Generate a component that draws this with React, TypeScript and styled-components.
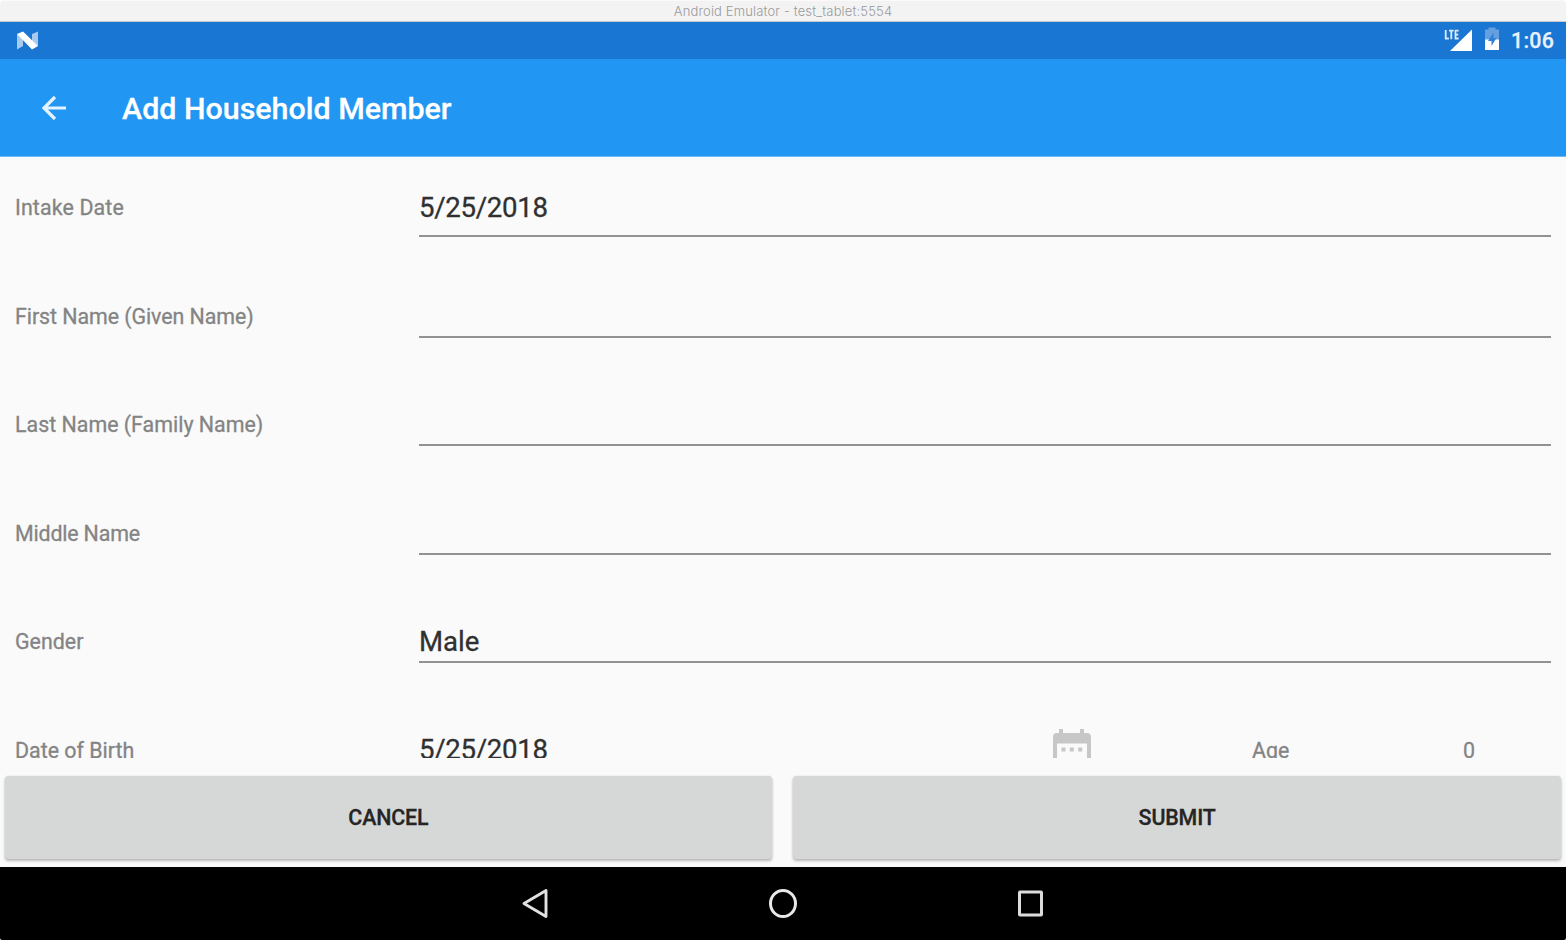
import React from 'react';
import styled, { createGlobalStyle } from 'styled-components';

const Global = createGlobalStyle`
  * { box-sizing: border-box; }
  html, body { margin: 0; background: #fff; }
  body { font-family: Roboto, "Liberation Sans", sans-serif; overflow: hidden; }
`;

const Window = styled.div`
  width: 1566px;
  height: 940px;
  display: flex;
  flex-direction: column;
  background: #fafafa;
  border-radius: 5px 5px 2px 2px;
  overflow: hidden;
`;

const TitleBar = styled.div`
  height: 22px;
  flex: none;
  background: #f3f3f3;
  border-top: 1px solid #fafafa;
  border-bottom: 1px solid #c5c8cc;
  display: flex;
  justify-content: center;
  font: 300 13px/20.500px Inter, sans-serif;
  letter-spacing: 0.15px;
  color: #9a9a9a;
  white-space: pre;
`;

const StatusBar = styled.div`
  height: 36.5px;
  flex: none;
  background: #1976d2;
  display: flex;
  align-items: center;
  justify-content: space-between;
  padding: 1px 12px 0 16px;
`;

const StatusIcons = styled.div`
  display: flex;
  align-items: center;
`;

const Clock = styled.span`
  margin-left: 11px;
  font-size: 21.4px;
  line-height: 38px;
  font-weight: 500;
  letter-spacing: 0.2px;
  color: #e8f1fb;
  -webkit-text-stroke: 0.25px #e8f1fb;
`;

const AppBar = styled.header`
  height: 98px;
  flex: none;
  background: #2196f3;
  border-bottom: 1px solid #6ebaf7;
  display: flex;
  align-items: center;
  padding: 1px 0 0 41px;
`;

const Heading = styled.h1`
  margin: 3px 0 0 55px;
  font-size: 30.4px;
  line-height: 36px;
  font-weight: 500;
  color: #fff;
  -webkit-text-stroke: 0.3px #fff;
  white-space: nowrap;
`;

const Form = styled.main`
  height: 601.5px;
  flex: none;
  overflow: hidden;
`;

const Row = styled.div`
  display: flex;
  height: 108.6px;
  padding: 0 15px;
`;

const Label = styled.label<{ $w?: number; $spacing?: number }>`
  width: ${(p) => p.$w ?? 404}px;
  flex: none;
  padding-top: 38.6px;
  font-size: 21.4px;
  line-height: 26px;
  letter-spacing: ${(p) => p.$spacing ?? 0}px;
  color: #848484;
  -webkit-text-stroke: 0.3px #848484;
  white-space: nowrap;
`;

const Field = styled.div<{ $h: number; $line?: boolean; $spacing?: number }>`
  flex: 1;
  height: ${(p) => p.$h}px;
  padding-top: 34px;
  border-bottom: ${(p) => (p.$line === false ? 'none' : '2px solid #929292')};
  font-size: 27.6px;
  line-height: 34px;
  letter-spacing: ${(p) => p.$spacing ?? 0}px;
  color: #303030;
  -webkit-text-stroke: 0.3px #303030;
`;

const CalendarSlot = styled.div`
  width: 200px;
  padding-top: 30px;
`;

const Actions = styled.div`
  flex: none;
  height: 108.5px;
  display: flex;
  gap: 21px;
  padding: 18px 5px 7px 4.5px;
`;

const ActionButton = styled.button`
  flex: 1;
  height: 82.5px;
  border: 0;
  border-radius: 3.5px;
  background: #d6d8d7;
  box-shadow: 0 2px 3px rgba(0, 0, 0, 0.26), 0 0 2px rgba(0, 0, 0, 0.1);
  font: 500 21.4px/26px Roboto, sans-serif;
  letter-spacing: -0.15px;
  color: #252525;
  -webkit-text-stroke: 0.3px #252525;
  padding: 2px 0 0;
`;

const NavBar = styled.nav`
  flex: 1;
  background: #000;
  display: flex;
  justify-content: center;
  align-items: center;
  gap: 217px;
`;

const rows = [
  { label: 'Intake Date', value: '5/25/2018', h: 80, spacing: 0.12, valueSpacing: -0.3 },
  { label: 'First Name (Given Name)', value: '', h: 72.5, spacing: -0.07 },
  { label: 'Last Name (Family Name)', value: '', h: 72.5 },
  { label: 'Middle Name', value: '', h: 72.5, spacing: -0.18 },
  { label: 'Gender', value: 'Male', h: 72.5 },
];

function NougatIcon() {
  return (
    <svg width="23" height="20" viewBox="0 0 23 20">
      <path d="M1 3v15.500l6-3.500V8zM22 .500v15l-6-5V3z" fill="#a9c9ee" />
      <path d="M1 3L7 .500l15 14.500-6 3.500z" fill="#fff" />
    </svg>
  );
}

function SignalIcon() {
  return (
    <svg width="29" height="24" viewBox="1 0 29 24">
      <path d="M29 .500v21.500H7z" fill="#fff" />
      <path d="M3 1.500v8.500h4M6 2.200h5M8.500 2.200V10.500M16 2.200H12.500V9.800H16" fill="none" stroke="#1976d2" strokeWidth="3.600" />
      <path d="M2.700 1v8.500h3.200M6 1.700h4.600M8.300 1.700V10.200M15.700 1.700H12.500V9.500H15.700M12.500 5.600H15.300" fill="none" stroke="#dce9f8" strokeWidth="1.800" />
    </svg>
  );
}

const BatterySvg = styled.svg`
  margin: -3px 0 0 11px;
`;

function BatteryIcon() {
  return (
    <BatterySvg width="16" height="24" viewBox="0 0 16 24">
      <path d="M1 2.500h3.500V.5h7v2H15V13H1z" fill="#649fe0" />
      <path d="M1 12.500h14v10.500H1z" fill="#fff" />
      <path d="M9.500 5.500L4 14h3.500v5l5-8H9.500z" fill="#2f80d6" />
    </BatterySvg>
  );
}

function CalendarIcon() {
  return (
    <svg width="40" height="46" viewBox="0 0 40 46" fill="#c7c7c7">
      <path d="M7 0h4v4h17V0h4v4h3q4 0 4 4v34q0 4-4 4H5q-4 0-4-4V8q0-4 4-4h2zM5 14.500V42h30V14.500z" fillRule="evenodd" />
      <path d="M9.500 18.500h4v4h-4zM17.800 18.500h4v4h-4zM26.200 18.500h4v4h-4z" />
    </svg>
  );
}

export default function App() {
  return (
    <>
      <Global />
      <Window>
        <TitleBar>Android Emulator - test_tablet:5554</TitleBar>
        <StatusBar>
          <NougatIcon />
          <StatusIcons>
            <SignalIcon />
            <BatteryIcon />
            <Clock>1:06</Clock>
          </StatusIcons>
        </StatusBar>
        <AppBar>
          <svg width="26" height="26" viewBox="0 0 26 26" fill="none" stroke="#e4f2fe" strokeWidth="3.200">
            <path d="M25 13H3M14 2L3 13l11 11" />
          </svg>
          <Heading>Add Household Member</Heading>
        </AppBar>
        <Form>
          {rows.map((r) => (
            <Row key={r.label}>
              <Label $spacing={r.spacing}>{r.label}</Label>
              <Field $h={r.h} $spacing={r.valueSpacing}>{r.value}</Field>
            </Row>
          ))}
          <Row>
            <Label>Date of Birth</Label>
            <Field $h={73} $line={false} $spacing={-0.3}>5/25/2018</Field>
            <CalendarSlot><CalendarIcon /></CalendarSlot>
            <Label $w={211}>Age</Label>
            <Label $w={88}>0</Label>
          </Row>
        </Form>
        <Actions>
          <ActionButton>CANCEL</ActionButton>
          <ActionButton>SUBMIT</ActionButton>
        </Actions>
        <NavBar>
          <svg width="30" height="32" viewBox="0 0 30 32" fill="none" stroke="#e2e2e2" strokeWidth="2.900" strokeLinejoin="round">
            <path d="M26 3.500v26L4 16.500z" />
          </svg>
          <svg width="32" height="32" viewBox="0 0 32 32" fill="none" stroke="#e8e8e8" strokeWidth="3">
            <ellipse cx="16" cy="16.500" rx="12.500" ry="13" />
          </svg>
          <svg width="30" height="30" viewBox="0 0 30 30" fill="none" stroke="#dcdcdc" strokeWidth="3">
            <rect x="3.500" y="4" width="22" height="23" rx="0.500" />
          </svg>
        </NavBar>
      </Window>
    </>
  );
}
